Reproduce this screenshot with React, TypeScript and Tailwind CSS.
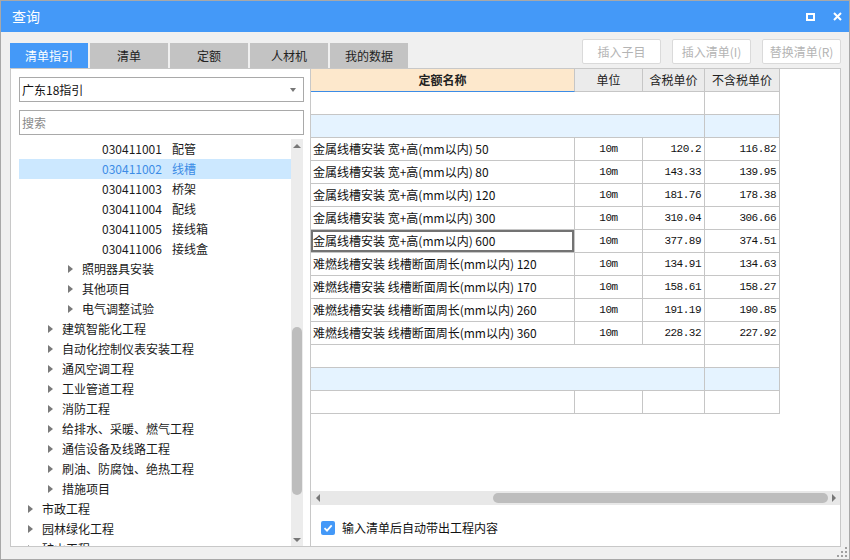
const UI_FONT = "font-['Noto_Sans_CJK_SC','Noto_Sans',sans-serif]";

type Node = { level: number; code?: string; label: string; leaf?: boolean; selected?: boolean };

const tree: Node[] = [
	{ level: 3, code: "030411001", label: "配管", leaf: true },
	{ level: 3, code: "030411002", label: "线槽", leaf: true, selected: true },
	{ level: 3, code: "030411003", label: "桥架", leaf: true },
	{ level: 3, code: "030411004", label: "配线", leaf: true },
	{ level: 3, code: "030411005", label: "接线箱", leaf: true },
	{ level: 3, code: "030411006", label: "接线盒", leaf: true },
	{ level: 2, label: "照明器具安装" },
	{ level: 2, label: "其他项目" },
	{ level: 2, label: "电气调整试验" },
	{ level: 1, label: "建筑智能化工程" },
	{ level: 1, label: "自动化控制仪表安装工程" },
	{ level: 1, label: "通风空调工程" },
	{ level: 1, label: "工业管道工程" },
	{ level: 1, label: "消防工程" },
	{ level: 1, label: "给排水、采暖、燃气工程" },
	{ level: 1, label: "通信设备及线路工程" },
	{ level: 1, label: "刷油、防腐蚀、绝热工程" },
	{ level: 1, label: "措施项目" },
	{ level: 0, label: "市政工程" },
	{ level: 0, label: "园林绿化工程" },
	{ level: 0, label: "矿山工程" },
];

const indent = ["pl-[9px]", "pl-[29px]", "pl-[49px]", "pl-[69px]"];

const rows = [
	["金属线槽安装 宽+高(mm以内) 50", "120.2", "116.82"],
	["金属线槽安装 宽+高(mm以内) 80", "143.33", "139.95"],
	["金属线槽安装 宽+高(mm以内) 120", "181.76", "178.38"],
	["金属线槽安装 宽+高(mm以内) 300", "310.04", "306.66"],
	["金属线槽安装 宽+高(mm以内) 600", "377.89", "374.51"],
	["难燃线槽安装 线槽断面周长(mm以内) 120", "134.91", "134.63"],
	["难燃线槽安装 线槽断面周长(mm以内) 170", "158.61", "158.27"],
	["难燃线槽安装 线槽断面周长(mm以内) 260", "191.19", "190.85"],
	["难燃线槽安装 线槽断面周长(mm以内) 360", "228.32", "227.92"],
];

function Arrow() {
	return <span className="w-0 h-0 border-y-[4px] border-y-transparent border-l-[5px] border-l-[#7a7a7a] mr-[9px]" />;
}

function TreeRow({ node }: { node: Node }) {
	return (
		<div
			className={`h-[20px] flex items-center text-[12px] whitespace-nowrap ${indent[node.level]} ${
				node.selected ? "bg-[#cce8ff] text-[#3c8ce6]" : "text-[#1a1a1a]"
			}`}
		>
			{node.leaf ? (
				<>
					<span className="ml-[14px] w-[70px]">{node.code}</span>
					<span>{node.label}</span>
				</>
			) : (
				<>
					<Arrow />
					<span>{node.label}</span>
				</>
			)}
		</div>
	);
}

function MergedRow({ blue }: { blue?: boolean }) {
	return (
		<div className={`h-[23px] w-[469px] flex border-b border-[#c6c6c6] ${blue ? "bg-[#e5f3ff]" : "bg-white"}`}>
			<div className="w-[394px] border-r border-[#c6c6c6]" />
			<div className="w-[75px] border-r border-[#c6c6c6]" />
		</div>
	);
}

const NUM = "font-['Liberation_Mono',monospace] text-[11px] tracking-[-0.5px]";

export default function App() {
	return (
		<div className={`w-[850px] h-[560px] bg-[#f0f0f0] border border-[#a8a8a8] flex flex-col ${UI_FONT}`}>
			{/* title bar */}
			<div className="h-[31px] bg-[#4499f8] flex items-center justify-between pl-[11px] pr-[7px] text-white">
				<span className="text-[14px]">查询</span>
				<div className="flex items-center gap-[18px]">
					<span className="w-[9px] h-[8px] border-2 border-white" />
					<svg width="9" height="9" viewBox="0 0 9 9">
						<path d="M1 1L8 8M8 1L1 8" stroke="white" strokeWidth="2" />
					</svg>
				</div>
			</div>

			{/* tabs + buttons */}
			<div className="h-[36px] flex items-end justify-between pl-[9px] pr-[8px]">
				<div className="flex gap-[2px]">
					{["清单指引", "清单", "定额", "人材机", "我的数据"].map((t, i) => (
						<div
							key={t}
							className={`w-[78px] h-[25px] flex items-center justify-center text-[12px] ${
								i === 0 ? "bg-[#4499f8] text-white" : "bg-[#c3c3c3] text-[#222]"
							}`}
						>
							{t}
						</div>
					))}
				</div>
				<div className="flex gap-[11px] mb-[4px]">
					{["插入子目", "插入清单(I)", "替换清单(R)"].map((b) => (
						<div
							key={b}
							className="w-[79px] h-[25px] bg-white border border-[#dadada] rounded-[2px] flex items-center justify-center text-[12px] text-[#b4b4b4]"
						>
							{b}
						</div>
					))}
				</div>
			</div>

			{/* main */}
			<div className="h-[479px] flex pl-[9px]">
				{/* left panel */}
				<div className="w-[301px] bg-white border border-[#c8c8c8] flex flex-col pt-[8px] pl-[8px] pr-[6px] overflow-hidden">
					<div className="h-[25px] border border-[#a9a9a9] flex items-center justify-between px-[2px] text-[12px] text-[#111]">
						<span>广东18指引</span>
						<span className="w-0 h-0 border-x-[3px] border-x-transparent border-t-[4px] border-t-[#777] mr-[5px]" />
					</div>
					<div className="h-[25px] mt-[8px] border border-[#a9a9a9] flex items-center px-[2px] text-[12px] text-[#8a8a8a]">
						搜索
					</div>
					<div className="flex-1 mt-[4px] flex overflow-hidden">
						<div className="w-[272px] overflow-hidden">
							{tree.map((n) => (
								<TreeRow key={n.label} node={n} />
							))}
						</div>
						<div className="w-[12px] bg-[#ececec] flex flex-col items-center">
							<span className="mt-[5px] w-0 h-0 border-x-[4px] border-x-transparent border-b-[4px] border-b-[#777]" />
							<div className="mt-[179px] w-[10px] h-[168px] rounded-full bg-[#bdbdbd]" />
							<div className="flex-1" />
							<span className="mb-[4px] w-0 h-0 border-x-[4px] border-x-transparent border-t-[4px] border-t-[#777]" />
						</div>
					</div>
				</div>

				{/* right panel */}
				<div className="w-[530px] bg-white border-y border-r border-[#c8c8c8] flex flex-col">
					<div className="flex-1 overflow-hidden text-[12px] text-[#111]">
						<div className="h-[23px] flex">
							<div className="w-[264px] bg-[#fde8cc] border-b border-[#3c8ce6] border-r border-r-[#c6c6c6] flex items-center justify-center font-bold text-[#222]">
								定额名称
							</div>
							{[
								["单位", "w-[68px]"],
								["含税单价", "w-[62px]"],
								["不含税单价", "w-[75px]"],
							].map(([t, w]) => (
								<div
									key={t}
									className={`${w} bg-[#ebebeb] border-b border-r border-[#c6c6c6] flex items-center justify-center text-[#222]`}
								>
									{t}
								</div>
							))}
						</div>
						<MergedRow />
						<MergedRow blue />
						{rows.map(([name, tax, notax], i) => (
							<div key={name} className="h-[23px] flex border-b border-[#c6c6c6] w-[469px]">
								<div
									className={`w-[264px] border-r border-[#c6c6c6] flex items-center pl-[2px] whitespace-nowrap ${
										i === 4 ? "shadow-[inset_0_0_0_2px_#737373]" : ""
									}`}
								>
									{name}
								</div>
								<div className={`w-[68px] border-r border-[#c6c6c6] flex items-center justify-center ${NUM}`}>10m</div>
								<div className={`w-[62px] border-r border-[#c6c6c6] flex items-center justify-end pr-[3px] ${NUM}`}>{tax}</div>
								<div className={`w-[75px] border-r border-[#c6c6c6] flex items-center justify-end pr-[3px] ${NUM}`}>{notax}</div>
							</div>
						))}
						<MergedRow />
						<MergedRow blue />
						<div className="h-[23px] flex border-b border-[#c6c6c6] w-[469px]">
							<div className="w-[264px] border-r border-[#c6c6c6]" />
							<div className="w-[68px] border-r border-[#c6c6c6]" />
							<div className="w-[62px] border-r border-[#c6c6c6]" />
							<div className="w-[75px] border-r border-[#c6c6c6]" />
						</div>
					</div>

					{/* horizontal scrollbar */}
					<div className="h-[14px] bg-[#e8e8e8] flex items-center">
						<div className="w-[14px] flex justify-center">
							<span className="w-0 h-0 border-y-[4px] border-y-transparent border-r-[4px] border-r-[#777]" />
						</div>
						<div className="flex-1" />
						<div className="w-[335px] h-[10px] rounded-full bg-[#bdbdbd]" />
						<div className="w-[12px] flex justify-center">
							<span className="w-0 h-0 border-y-[4px] border-y-transparent border-l-[4px] border-l-[#777]" />
						</div>
					</div>

					<div className="h-[41px] flex items-start pt-[16px] pl-[10px]">
						<div className="w-[14px] h-[14px] rounded-[2px] bg-[#4499f8] flex items-center justify-center">
							<svg width="10" height="10" viewBox="0 0 10 10">
								<path d="M1.5 5.2L4 7.6L8.7 2.4" stroke="white" strokeWidth="1.8" fill="none" />
							</svg>
						</div>
						<span className="ml-[7px] text-[12px] text-[#111] leading-[14px]">输入清单后自动带出工程内容</span>
					</div>
				</div>
			</div>

			{/* bottom strip with grip */}
			<div className="flex-1 flex justify-end items-end pr-[1px] pb-[1px]">
				<svg width="11" height="11" viewBox="0 0 11 11">
					{[
						[8, 0],
						[4, 4],
						[8, 4],
						[0, 8],
						[4, 8],
						[8, 8],
					].map(([x, y]) => (
						<rect key={`${x}-${y}`} x={x} y={y} width="2" height="2" fill="#a0a0a0" />
					))}
				</svg>
			</div>
		</div>
	);
}
